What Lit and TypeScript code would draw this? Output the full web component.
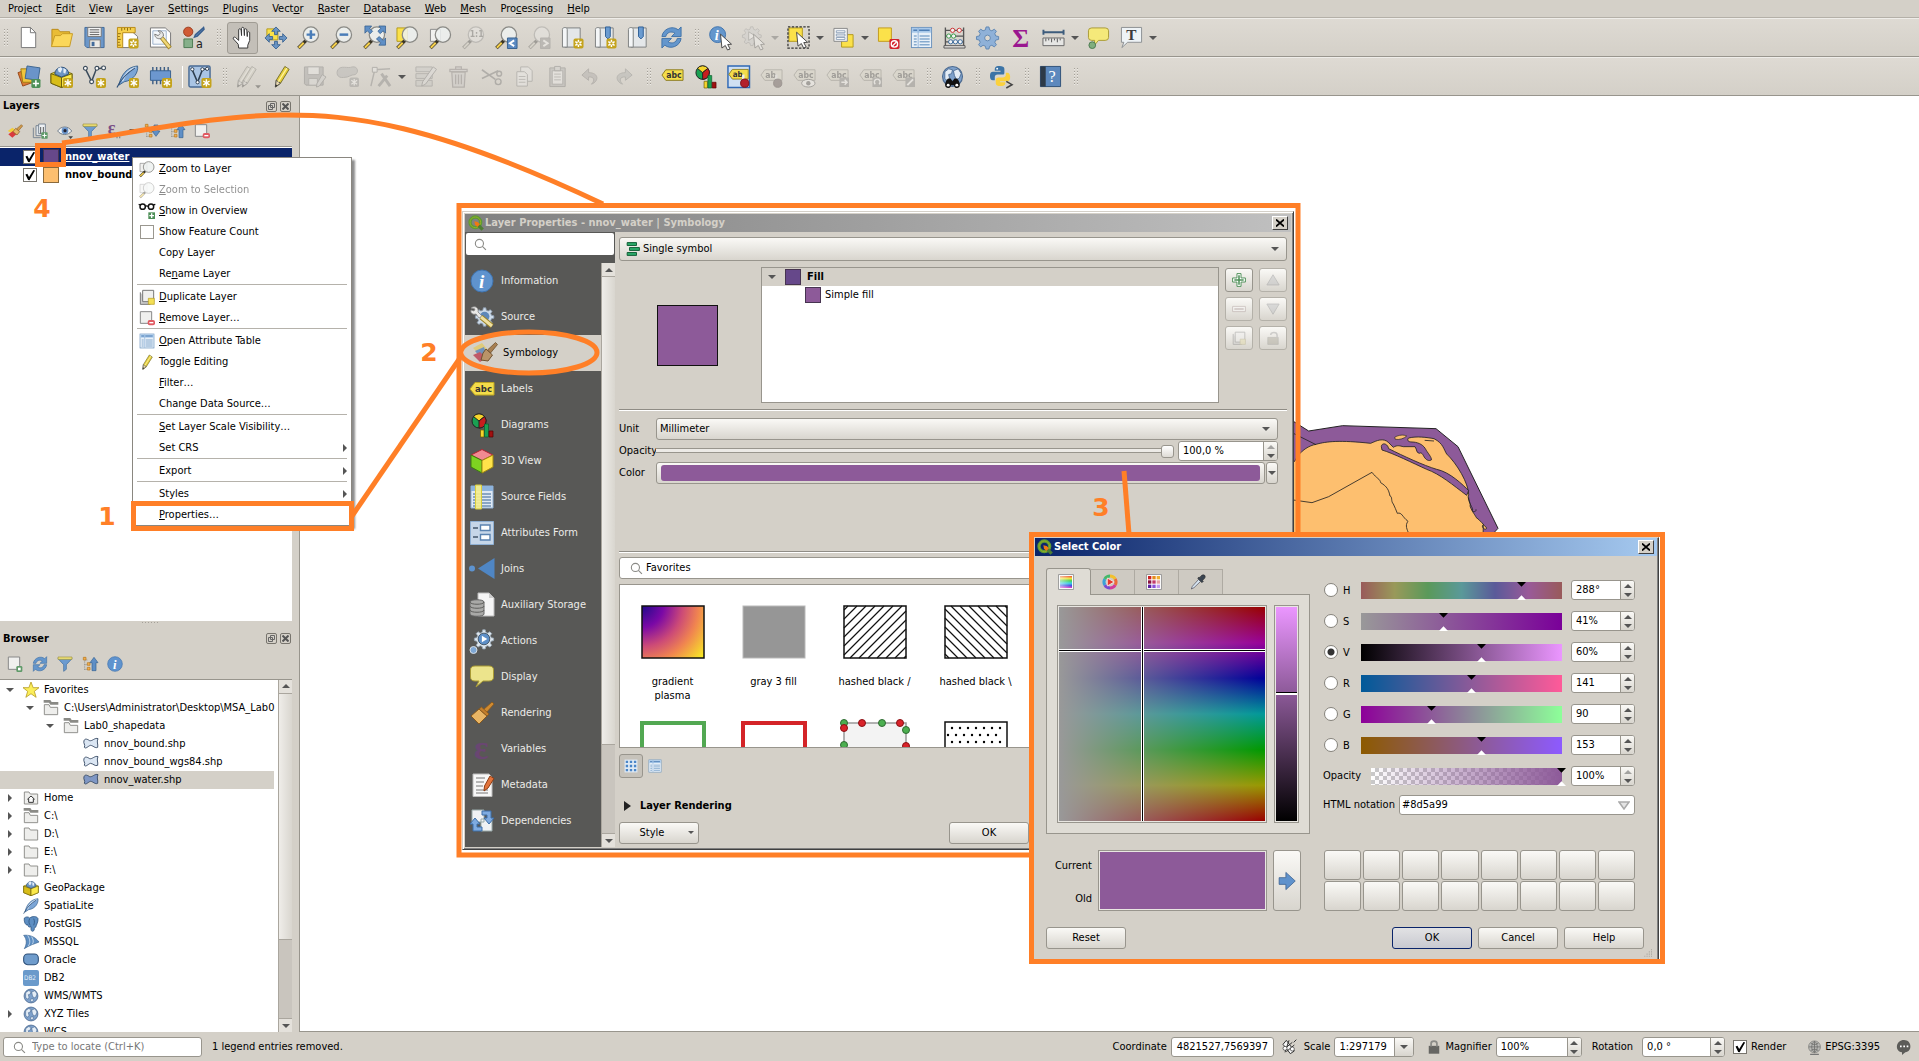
import { LitElement, html, svg, css, nothing, TemplateResult } from "lit";
import { customElement, property } from "lit/decorators.js";
import { classMap } from "lit/directives/class-map.js";
import { styleMap } from "lit/directives/style-map.js";

/* ---------- icon fragments, drawn on a 24 x 24 grid ---------- */

const sparkle = (x: number, y: number) => svg`
  <rect x=${x - 0.5} y=${y - 0.5} width="10.500" height="10.500" rx="2" fill="#c4a31c"/>
  <path transform="translate(${x + 4.7} ${y + 4.7})" d="M0 -3.800V3.800M-3.300 -2L3.300 2M-3.300 2L3.300 -2" stroke="#fff" stroke-width="1.500"/>`;

const ring = (x: number, y: number) => svg`
  ${sparkle(x, y)}<circle cx=${x + 4.7} cy=${y + 4.7} r="1.700" fill="#c4a31c" stroke="#fff" stroke-width=".8"/>`;

const lens = (inner: unknown = nothing, back: unknown = nothing) => svg`
  ${back}
  <path d="M9.500 15L1.500 23" stroke="#3a3526" stroke-width="3.600"/>
  <path d="M7 17.500L1.900 22.600" stroke="#f4cf4c" stroke-width="2.200"/>
  <circle cx="14.500" cy="9" r="8" fill="#eef1f0" fill-opacity=".86" stroke="#8a8a86" stroke-width="1.300"/>
  ${inner}`;

const globe = svg`
  <circle cx="12" cy="12" r="10.400" fill="#7ea1cb" stroke="#4c6a90" stroke-width="1.200"/>
  <path d="M4 7l4-3 4 1-1 4-3 1 1 4-2 3-3-3zM13 6l5-2 3 5-2 5-3 1-2-4zM11 17l4-1 1 3-4 2z" fill="#e4edf6" stroke="#3d5e88" stroke-width=".8"/>`;

const tag = (label: string) => svg`
  <path d="M1 10.500L5 5H23V16H5Z" fill="#f4dd4a" stroke="#8b7a1e"/>
  <text x="5.500" y="14" font-size="9" font-weight="700" fill="#333">${label}</text>`;

const cursor = svg`<path d="M12 8.500L23.500 19L19.500 19.300L22 24L19.300 25L17 20.300L13.500 23Z" fill="#fff" stroke="#444" stroke-width="1"/>`;

const pencil = svg`
  <path d="M6.500 16L15.500 1.500L20 4.500L11 19L6 23Z" fill="#e6cf3c" stroke="#77702c"/>
  <path d="M5.500 23L6.500 16L11 19Z" fill="#e9d9b0" stroke="#555"/>
  <path d="M5.500 23L6 20L8 21.300Z" fill="#333"/>
  <path d="M8.700 17.400L17.600 3.300" stroke="#fff3a0" stroke-width="1.300"/>`;

const table = svg`
  <rect x="1.500" y="1.500" width="21" height="21" fill="#e8f0f8" stroke="#6b93bd"/>
  <path d="M2 2H22V7H2Z" fill="#a9c9ea"/>
  <path d="M3.500 4.500H7.500M9.500 4.500H20.500" stroke="#4f7fb5" stroke-width="1.500"/>
  <path d="M8.500 2V22" stroke="#8fb4da"/>
  <path d="M4 10.500H7M4 13.500H7M4 16.500H7M4 19.500H7M10 10.500H20.500M10 13.500H20.500M10 16.500H20.500M10 19.500H20.500" stroke="#86aace" stroke-width="1.500"/>`;

const refresh = svg`
  <path d="M2 11C3 3 13 -1 19 4L22 1V11H12L15.500 7.500C12 5 7 6.500 6 11Z" fill="#6496cc" stroke="#4273a8"/>
  <path d="M22 13C21 21 11 25 5 20L2 23V13H12L8.500 16.500C12 19 17 17.500 18 13Z" fill="#6496cc" stroke="#4273a8"/>`;

const book = svg`
  <path d="M4 2H20V22H4Z" fill="#e4e7e9" stroke="#7c7f80"/>
  <path d="M1.500 3.500C1.500 1 6.500 1 6.500 3.500V22H1.500Z" fill="#f4f6f7" stroke="#7c7f80"/>`;
const ribbon = svg`<path d="M12 1H17V11L14.500 13.500L12 11Z" fill="#6a9bd0" stroke="#2f5f95"/>`;

const feather = svg`
  <path d="M3 21C5 11 11 2 22.500 1C23.500 7 19 16 8.500 17.500Z" fill="#7ba5d6" stroke="#3f668f"/>
  <path d="M6.500 17C9 10 14 5 20.500 2.500" fill="none" stroke="#cfe0f2" stroke-width="2"/>
  <path d="M1 23.500C5 15 12 8 20 3" fill="none" stroke="#2f5078" stroke-width="1.200"/>`;

const box = svg`
  <path d="M1 9L12 5L23 9V19L12 23.500L1 19Z" fill="#f1d92e" stroke="#7f7110"/>
  <path d="M1 9L12 13V23.500L1 19Z" fill="#d8bd18" stroke="#6b5f0c"/>
  <path d="M12 13V23.500L23 19V9Z" fill="#fbe94a" stroke="#6b5f0c"/>
  <path d="M5 9.500A7 7 0 1 1 19.500 9.500L12 12.500Z" fill="#6d95c4" stroke="#2f5078"/>
  <path d="M8 4l3-2 2 2-2 4-2-1zM14 3l3 2-1 4-2-1z" fill="#e4edf6"/>`;

const pie = svg`
  <circle cx="9" cy="8" r="7" fill="#1aa052" stroke="#222"/>
  <path d="M9 8L3.500 3.500A7 7 0 0 1 14.500 3.500Z" fill="#f6d52c" stroke="#222"/>
  <path d="M9 8L14.500 3.500A7 7 0 0 1 9 15Z" fill="#c81e1e" stroke="#222"/>
  <path d="M10.500 17H14V24H10.500Z" fill="#f6d52c" stroke="#6b5a00" stroke-width=".7"/>
  <path d="M14.500 11H18.500V24H14.500Z" fill="#1aa052" stroke="#0d5a2c" stroke-width=".7"/>
  <path d="M19 18H23V24H19Z" fill="#a01010" stroke="#500" stroke-width=".7"/>`;

const gearShape = (fill: string, stroke: string) => svg`
  <path d="M10.500 1h3l.7 3 2.300 1 2.600-1.700 2.200 2.200L19.600 8l1 2.400 3 .6v3l-3 .7-1 2.300 1.700 2.600-2.200 2.200-2.600-1.700-2.300 1-.7 2.900h-3l-.7-2.900-2.400-1-2.500 1.700-2.200-2.200L4.400 17l-1-2.300-2.900-.7v-3l2.900-.6L4.400 8 2.700 5.500l2.200-2.200L7.400 5l2.400-1z" fill=${fill} stroke=${stroke}/>`;

const balloon = svg`<path d="M5 2H19Q22.500 2 22.500 5V12Q22.500 15 19 15H12L7 21L8 15H5Q1.500 15 1.500 12V5Q1.500 2 5 2Z" fill="#f5e97a" stroke="#a89a34"/>`;

const pin = svg`<path d="M17 10V16" stroke="#eee" stroke-width="2.500"/><circle cx="18.500" cy="19" r="4.300" fill="#b3202c" stroke="#7a1018"/>`;

const info = svg`
  <circle cx="12" cy="12" r="11" fill="#5f93ce" stroke="#3f73ae"/>
  <text x="9" y="19" font-size="19" font-weight="700" font-style="italic" font-family="Liberation Serif, serif" fill="#fff">i</text>`;

const folder = svg`<path d="M2 3H9L11 6H22V21H2Z" fill="#eeeeec" stroke="#8a8a86" stroke-width="1.400"/>`;
const folderLinked = svg`<path d="M1 0H11L13 3H23V7H11L9 4H1Z" fill="#8a8a86"/><path d="M2 7V22H22V11H11L9 7Z" fill="#eeeeec" stroke="#8a8a86" stroke-width="1.400"/>`;

const polygonLayer = (fill: string) => svg`<path d="M1.500 7C3 3 7 5 10 7C14 8 18 2 22.500 4C20 9 23 12 22 17C18 19 15 14 11 14C8 15 4 20 2 17C4 13 0 11 1.500 7Z" fill=${fill} stroke="#3a4c66" stroke-width="1.400"/>`;

const magnifierPlain = svg`<circle cx="10" cy="10" r="7.500" fill="none" stroke="#8a8a86" stroke-width="2"/><path d="M15.500 15.500L22 22" stroke="#8a8a86" stroke-width="2"/>`;

const filter = svg`<path d="M1.500 4L10 13V23L14 20V13L22.500 4Z" fill="#6c9bd0" stroke="#3d6a9c"/><path d="M1.500 1.500H22.500V5H1.500Z" fill="#f1e37a" stroke="#9c8f3a"/>`;

const scissors = svg`<path d="M2 5L16 15M2 14L19 6" stroke="#666" stroke-width="1.800"/><circle cx="19" cy="17.500" r="3" fill="none" stroke="#666" stroke-width="1.500"/><circle cx="20" cy="9" r="2.500" fill="none" stroke="#666" stroke-width="1.500"/>`;

const qgisLogo = svg`
  <circle cx="11" cy="11" r="8" fill="none" stroke="#5d9a35" stroke-width="5"/>
  <circle cx="11" cy="11" r="8" fill="none" stroke="#93b023" stroke-width="1.500"/>
  <path d="M13 13L22 22" stroke="#4d7e33" stroke-width="5"/>
  <path d="M9.500 9.500L14.500 10.500L18 14L14 18L10.500 14.500Z" fill="#ee7913"/>`;

const brush = svg`
  <path d="M22 1L24 3L16 12L13 9Z" fill="#d08a30" stroke="#86571c" stroke-width=".8"/>
  <path d="M9 8L17 15L9 23L1 15Z" fill="#e8b565" stroke="#86571c"/>
  <path d="M9 8L11.500 6L19 13L17 15Z" fill="#c47f2c" stroke="#86571c" stroke-width=".8"/>`;

const paint = svg`
  <path d="M1 7L10 2L15 8L9 15Z" fill="#dfcb7a"/><path d="M3 10L12 6L14 12L9 17Z" fill="#6f92bd"/><path d="M1 14L8 11L14 17L8 21Z" fill="#bf5a68"/>
  <path d="M23.500 1.500L25.500 3.500L18.500 12L15.500 9Z" fill="#a87f50" stroke="#6f5230" stroke-width=".8"/>
  <path d="M14 8L20.500 14L16 20L9 19L11 12Z" fill="#b99468" stroke="#6f5230"/>`;

const stylePaint = svg`
  <path d="M1 12L8 7L14 11L9 16Z" fill="#f2cf3c"/><path d="M2 17L9 12L14 17L8 22Z" fill="#d93a3f"/>
  <path d="M21.500 2.500L23.500 4.500L17 12L14 9Z" fill="#d09a4a" stroke="#86571c" stroke-width=".8"/>
  <path d="M13 8L19 13L15 18L9 13Z" fill="#e3b56a" stroke="#86571c"/>`;

const tree = svg`<path d="M4 2V22M4 6H9M4 13H9M4 20H9" stroke="#8c8c88" stroke-width="1.200" stroke-dasharray="1.500 1"/><path d="M2 2H6V6H2ZM8 10H12V14H8ZM8 17H12V21H8Z" fill="#f0b050" stroke="#b8741a"/>`;

const ICONS: Record<string, unknown> = {
  new: svg`<path d="M4.500 1.500H14L19.500 7V22.500H4.500Z" fill="#fff" stroke="#777"/><path d="M14 1.500V7H19.500" fill="none" stroke="#777"/>`,
  open: svg`<path d="M2 21V3.500H8.500L10.500 6H20.500V9" fill="#e9bc35" stroke="#b98a18"/><path d="M1.500 21.500L5 10H11L13 8H23.500L20.500 21.500Z" fill="#fbd75a" stroke="#c79a22"/>`,
  save: svg`<path d="M2 1.500H22V22.500H4L2 20.500Z" fill="#6c97c9" stroke="#426b9b"/><path d="M5 1.500H19V11H5Z" fill="#f5f5f5" stroke="#777"/><path d="M7 4H17M7 6.500H17M7 9H17" stroke="#555"/><path d="M7 14.500H18V22.500H7Z" fill="#eceae6" stroke="#777"/><path d="M9 16.500H12V21H9Z" fill="#426b9b"/>`,
  newLayout: svg`<path d="M6 6H17L22.500 11V22.500H6Z" fill="#fff" stroke="#777"/><path d="M1.500 1.500H20V7H7V22.500H1.500Z" fill="#f6d04c" stroke="#b98a18"/><path d="M6 2V5M9 2V4M12 2V5M15 2V4M2 8H5M2 11H4M2 14H5M2 17H4M2 20H5" stroke="#8b6a10"/>${ring(13.500, 13.500)}`,
  layoutMgr: svg`<path d="M1.500 2H17L22.500 7V22H1.500Z" fill="#fff" stroke="#777"/><path d="M4 5H18V19H4Z" fill="#f4f7fa" stroke="#9db3cc"/><path d="M13 12L22 23" stroke="#a3872a" stroke-width="4.500"/><path d="M13 12L21.500 22.300" stroke="#f0d878" stroke-width="2.600"/><path d="M6 8.500C6 12 9 14 12.500 13L15 10.500C15.500 7 12.500 4.500 9.500 5L12 7.500L9.500 10Z" fill="#e8e8e6" stroke="#777"/>`,
  styleMgr: svg`<circle cx="6.500" cy="6" r="4.800" fill="#d05a34" stroke="#9c3b1c"/><path d="M22.500 1.500L14 9L13 11.500L16 10.500L23 3.500Z" fill="#5e86b6" stroke="#395f8e" stroke-width="1.500"/><path d="M2 13.500H11V22.500H2Z" fill="#86b08a" stroke="#4c7a52"/><text x="14.500" y="22.500" font-size="13" fill="#222">a</text>`,
  hand: svg`<path d="M8 23L7.500 19L2.500 13.500C1.500 12 3.500 11 4.700 12L8 15V4C8 2.500 10.300 2.500 10.500 4L11 10V2.500C11.200 1 13.200 1 13.500 2.500L14 10V4C14.200 2.500 16.200 2.500 16.500 4L17 11V7C17.200 5.700 19.300 5.700 19.500 7V15L17.500 20V23Z" fill="#fff" stroke="#333"/>`,
  panSel: svg`<path d="M3 3H14.500V14.500H3Z" fill="#fbe14a" stroke="#b39a1c"/><path d="M12.500 1L17 5.500H14V9H11V5.500H8ZM12.500 24L8 19.500H11V16H14V19.500H17ZM1 12.500L5.500 8V11H9V14H5.500V17ZM24 12.500L19.500 17V14H16V11H19.500V8Z" fill="#6a94c4" stroke="#35608f" stroke-width=".9"/>`,
  zoomIn: lens(svg`<path d="M14.500 4.500V13.500M10 9H19" stroke="#4a7db8" stroke-width="2.600"/>`),
  zoomOut: lens(svg`<path d="M10 9H19" stroke="#4a7db8" stroke-width="2.600"/>`),
  zoomFull: lens(svg`<path d="M2 0H9L7 2.500L10 5.500L7.500 8L4.500 5L2 7.500ZM23.500 0H16.500L18.500 2.500L15.500 5.500L18 8L21 5L23.500 7.500ZM23.500 20H16.500L18.500 17.500L14 13.500L17 11L21 15L23.500 12.500Z" fill="#5f8fc6" stroke="#35608f" stroke-width=".8"/>`),
  zoomSel: lens(nothing, svg`<path d="M1 2H12V16H1Z" fill="#fbe14a" stroke="#b39a1c"/>`),
  zoomLayer: lens(nothing, svg`<path d="M1.500 3.500H12V16H1.500Z" fill="#f1f1ef" stroke="#888"/>`),
  zoomNative: lens(svg`<text x="8" y="12" font-size="9" font-weight="700" fill="#555">1:1</text>`),
  zoomLast: lens(svg`<path d="M13 12.500H23V23.500H13Z" fill="#5b8ac2" stroke="#35608f"/><path d="M20 15L15.500 18L20 21" fill="none" stroke="#fff" stroke-width="2"/>`),
  zoomNext: lens(svg`<path d="M13 12.500H23V23.500H13Z" fill="#888" stroke="#777"/><path d="M16 15L20.500 18L16 21" fill="none" stroke="#fff" stroke-width="2"/>`),
  bookNew: svg`${book}${ring(13.500, 13.500)}`,
  bookRibbonNew: svg`${book}${ribbon}${ring(13.500, 13.500)}`,
  bookRibbon: svg`${book}${ribbon}`,
  refresh,
  identify: svg`<circle cx="9" cy="9" r="8.300" fill="#6496cc" stroke="#3f73ae"/><text x="6" y="14.500" font-size="15" font-weight="700" font-style="italic" font-family="Liberation Serif, serif" fill="#fff">i</text>${cursor}`,
  action: svg`<g transform="scale(.85)">${gearShape("#cfcfcf", "#888")}</g><path d="M7 6L14 10.500L7 15Z" fill="#fff" stroke="#777"/>${cursor}`,
  select: svg`<path d="M2 2H16V16H2Z" fill="#fbe14a" stroke="#b39a1c"/><path d="M1 1H23V23H1Z" fill="none" stroke="#333" stroke-width="1.300" stroke-dasharray="2.500 1.500"/><g transform="translate(-2 -2)">${cursor}</g>`,
  form: svg`<path d="M10 9H22V22H10Z" fill="#fbe14a" stroke="#b39a1c"/><path d="M2 2.500H16V16H2Z" fill="#f4f5f6" stroke="#888"/><path d="M4.500 5H13.500V7H4.500ZM4.500 8.500H13.500V10.500H4.500ZM4.500 12H13.500V14H4.500Z" fill="#fff" stroke="#778fab" stroke-width=".8"/>`,
  deselect: svg`<path d="M1.500 2H15V16H1.500Z" fill="#fbe14a" stroke="#c19a1c"/><rect x="13" y="13.500" width="10.500" height="10.500" rx="1.500" fill="#d3222c"/><circle cx="18.200" cy="18.700" r="3.300" fill="none" stroke="#fff" stroke-width="1.400"/><path d="M16 21L20.500 16.500" stroke="#fff" stroke-width="1.300"/>`,
  table,
  abacus: svg`<path d="M2.500 1.500V21M21.500 1.500V21M2.500 4.500H21.500M2.500 10.500H21.500M2.500 16.500H21.500" stroke="#555" stroke-width="1.400"/><path d="M1 20.500H23V23H1Z" fill="#e5e3df" stroke="#555"/><g fill="#f4f4f4"><g stroke="#c33"><circle cx="10" cy="4.500" r="2.200"/><circle cx="17" cy="4.500" r="2.200"/></g><g stroke="#3a9a4a"><circle cx="6" cy="10.500" r="2.200"/><circle cx="11" cy="10.500" r="2.200"/></g><g stroke="#37699c"><circle cx="8" cy="16.500" r="2.200"/><circle cx="13" cy="16.500" r="2.200"/><circle cx="18" cy="16.500" r="2.200"/></g></g>`,
  gear: svg`${gearShape("#8fb1d8", "#5f87b3")}<circle cx="12" cy="12.500" r="3" fill="#dcd8d0" stroke="#5f87b3"/>`,
  sigma: svg`<text x="3.500" y="22" font-size="27" font-weight="700" font-family="Liberation Serif, serif" fill="#9a1790">Σ</text>`,
  measure: svg`<path d="M1.500 6.500H22.500M1.500 4V9M22.500 4V9" stroke="#3d5c7c" stroke-width="2"/><path d="M1 12.500H23V20.500H1Z" fill="#e6e6e4" stroke="#666"/><path d="M4 13V16M7 13V15M10 13V17M13 13V15M16 13V17M19 13V15" stroke="#555"/>`,
  tip: svg`${balloon}<circle cx="5.500" cy="20" r="3.500" fill="#7fae7e" stroke="#4c7a52"/>`,
  textAnn: svg`<path d="M1.500 1.500H22.500V17H8L2 22.500L4 17H1.500Z" fill="#eef3f6" stroke="#8b8f92"/><text x="6.500" y="15" font-size="16" font-weight="700" font-family="Liberation Serif, serif" fill="#3c3c3c">T</text>`,
  dataSource: svg`<path d="M1 8L12 4L17 18L6 22Z" fill="#dc7a34" stroke="#96481a"/><path d="M4 4H17V18H6Z" fill="#f1c53c" stroke="#a07c14"/><path d="M10.500 1L24 3L22 16L8.500 14Z" fill="#6a94c9" stroke="#3b638f"/><rect x="15" y="14.500" width="9.500" height="9.500" rx="1.500" fill="#4d8f57"/><path d="M19.700 16V22.500M16.500 19.300H23" stroke="#fff" stroke-width="1.600"/>`,
  geopackage: svg`${box}${sparkle(14, 14)}`,
  geopackagePlain: box,
  vectorNew: svg`<path d="M2.500 4L9 17L14 4L22 3" fill="none" stroke="#3c4c5c" stroke-width="1.600"/><g fill="#fff" stroke="#3c4c5c" stroke-width="1.200"><circle cx="2.500" cy="3.500" r="2"/><circle cx="9" cy="17.500" r="2"/><circle cx="14.500" cy="3.500" r="2"/><circle cx="21.500" cy="3" r="2"/></g>${sparkle(14, 14)}`,
  feather: svg`${feather}${sparkle(14, 14)}`,
  featherPlain: feather,
  chip: svg`<path d="M4 2V20M8 2V20M12 2V20M16 2V20M20 2V20" stroke="#3f5f85" stroke-width="1.500"/><path d="M1.500 6H22.500V16H1.500Z" fill="#6c97cf" stroke="#36608f"/>${sparkle(14, 14)}`,
  virtual: svg`<rect x="1" y="1" width="22" height="22" rx="1.500" fill="#a9c4e4" stroke="#486a94" stroke-width="1.500"/><path d="M4 4L10 18L15 5L20 4" fill="none" stroke="#2d3e50" stroke-width="1.600"/><g fill="#fff" stroke="#2d3e50"><circle cx="4.500" cy="4.500" r="1.700"/><circle cx="10" cy="18" r="1.700"/><circle cx="15" cy="4.500" r="1.700"/><circle cx="20" cy="4" r="1.700"/></g>${sparkle(14.500, 14)}`,
  pencils: svg`<g transform="translate(-5 0)">${pencil}</g>${pencil}<path d="M19 21H25L22 24.500Z" fill="#222"/>`,
  pencil,
  saveEdits: svg`<path d="M1.500 2H21V21H3L1.500 19.500Z" fill="#999" stroke="#666"/><path d="M5 2H17V10H5Z" fill="#eee" stroke="#777"/><path d="M6 14H15V21H6Z" fill="#ddd" stroke="#777"/><path d="M20 10L24 12.500L17 22L14 23L14.500 19.500Z" fill="#ccc" stroke="#666"/>`,
  addPoly: svg`<path d="M2 5C5 0 12 4 17 2C23 1 24 8 20 10C15 10 14 13 8 13C1 14 0 8 2 5Z" fill="#aaa" stroke="#777"/><rect x="14" y="13" width="10" height="10" rx="2" fill="#888"/><path d="M19 14.500V21.500M16 16L22 20M16 20L22 16" stroke="#fff" stroke-width="1.300"/>`,
  vertex: svg`<path d="M2 22L6 5L22 4" fill="none" stroke="#777" stroke-width="1.500"/><path d="M3.500 2.500H8.500V7.500H3.500Z" fill="#eee" stroke="#666"/><path d="M10 22L19 11M13 9L22 22" stroke="#777" stroke-width="3"/>`,
  multiEdit: svg`<path d="M2 2H19V7H2ZM2 9H19V14H2ZM2 16H19V22H2Z" fill="#c9c6a8" stroke="#777"/><path d="M20 2L23.500 4.500L12 20L8 22L9 17.500Z" fill="#ddd" stroke="#666"/>`,
  trash: svg`<path d="M3 4.500H21V7H3ZM9 2H15V4.500H9ZM5 7.500H19L18 23H6Z" fill="#d9c4c2" stroke="#9a6a66" stroke-width="1.300"/><path d="M9 10V20M12 10V20M15 10V20" stroke="#9a6a66" stroke-width="1.300"/>`,
  cut: scissors,
  copy: svg`<path d="M8 2H16L20 6V17H8Z" fill="#eee" stroke="#777"/><path d="M4 7H12L15 10V22H4Z" fill="#f5f5f5" stroke="#777"/><path d="M6 12H13M6 15H13M6 18H13" stroke="#888"/>`,
  paste: svg`<path d="M4 3H20V22.500H4Z" fill="#aaa" stroke="#666"/><path d="M6.500 6H17.500V20H6.500Z" fill="#f5f5f5" stroke="#777"/><path d="M9 1.500H15V6H9Z" fill="#ccc" stroke="#666"/><path d="M8.500 9.500H15.500M8.500 12.500H15.500M8.500 15.500H15.500" stroke="#888"/>`,
  undo: svg`<path d="M10 4L3 10.500L10 16V12.500C16 12 17 16 13 20C21 17 21 8 10 8Z" fill="#b8998c" stroke="#8c6a5c"/>`,
  redo: svg`<path d="M14 4L21 10.500L14 16V12.500C8 12 7 16 11 20C3 17 3 8 14 8Z" fill="#9cae9c" stroke="#6c806c"/>`,
  abc: tag("abc"),
  diagram: pie,
  abPin: svg`<path d="M1 1H23.500V23.500H1Z" fill="#cfe0f3" stroke="#2f68b5" stroke-width="1.500"/><g transform="translate(1 0) scale(.92)">${tag("ab")}</g>${pin}`,
  tagPin: svg`${tag("ab")}${pin}`,
  tagEye: svg`${tag("abc")}<ellipse cx="16" cy="19" rx="7" ry="4" fill="#fff" stroke="#444"/><circle cx="16" cy="19" r="2.300" fill="#444"/>`,
  tagMove: svg`${tag("abc")}<path d="M14 13H24V23H14Z" fill="#777"/><path d="M16 18H22M19.500 15.500L22 18L19.500 20.500" fill="none" stroke="#fff" stroke-width="1.500"/>`,
  tagRotate: svg`${tag("abc")}<path d="M14 13H24V23H14Z" fill="#777"/><path d="M17 20A3 3 0 1 1 21 20" fill="none" stroke="#fff" stroke-width="1.500"/>`,
  tagEdit: svg`${tag("abc")}<path d="M14 13H24V23H14Z" fill="#777"/><path d="M16 21L22 15" stroke="#fff" stroke-width="2"/>`,
  metaSearch: svg`${globe}<path d="M5 23C3 20 6 14 8 14H10L12 17L14 14H16C18 14 21 20 19 23C17 25 14 24 13.500 21H10.500C10 24 7 25 5 23Z" fill="#111"/><circle cx="7.500" cy="21" r="1.500" fill="#fff"/><circle cx="16.500" cy="21" r="1.500" fill="#fff"/>`,
  python: svg`<path d="M10 1C5 1 5 3 5 6H11V7H3C0 7 0 10 0 12S1 16 3 16H5V13C5 11 6 10 8 10H13C15 10 15 9 15 7V4C15 2 13 1 10 1Z" fill="#3c74a6"/><circle cx="7.500" cy="3.800" r="1" fill="#fff"/><path d="M11 22C16 22 16 20 16 18H10.500V17H18C21 17 21 14 21 12S20 8 18 8H16.500V10.500C16.500 12 15 13 13.500 13H9C7 13 6 14 6 16V19C6 21 8 22 11 22Z" fill="#fbd13d"/><path d="M17 17L23 20.500L17 24" fill="none" stroke="#444" stroke-width="1.600"/>`,
  help: svg`<path d="M1.500 1.500H22.500V22.500H1.500Z" fill="#5c88bd" stroke="#2f5078"/><path d="M1.500 1.500H7V22.500H1.500Z" fill="#2d3a48"/><text x="10" y="18" font-size="17" font-family="Liberation Serif, serif" fill="#fff">?</text>`,
  paint,
  stylePaint,
  addGroup: svg`<path d="M2 7V22H13" fill="none" stroke="#7b8794" stroke-width="1.500"/><path d="M6 4H17V19H6Z" fill="#dfe3e7" stroke="#7b8794" stroke-width="1.500"/><path d="M10 1.500H20V16H10Z" fill="#eef1f4" stroke="#7b8794" stroke-width="1.500"/><path d="M13 6V16M17 6V16" stroke="#444" stroke-width="1.300"/><rect x="14" y="14" width="9.500" height="9.500" rx="1" fill="#5f9a68"/><path d="M18.700 15.500V22M15.500 18.700H22" stroke="#fff" stroke-width="1.500"/>`,
  eye: svg`<path d="M1 12C6 4 17 4 22 12C17 19 6 19 1 12Z" fill="#f3f5f7" stroke="#6f7b88" stroke-width="1.500"/><circle cx="12" cy="11.500" r="5" fill="#6a94c9"/><circle cx="12" cy="11.500" r="2.400" fill="#223"/><path d="M17 20H24L20.500 24Z" fill="#444"/>`,
  filter,
  expression: svg`<text x="1" y="16" font-size="27" font-family="Liberation Serif, serif" font-weight="700" fill="#7a4f86">ε</text><path d="M15 20V23M19 20V23" stroke="#888" stroke-width="2"/>`,
  expand: svg`${tree}<path d="M15 3H21V12H24L18 20L12 12H15Z" fill="#5f8fc6" stroke="#35608f"/>`,
  collapse: svg`${tree}<path d="M15 22H21V10H24L18 2L12 10H15Z" fill="#5f8fc6" stroke="#35608f"/>`,
  removeLayer: svg`<path d="M2 2.500H19V20H2Z" fill="#f0f0ee" stroke="#888" stroke-width="1.500"/><rect x="13" y="15" width="11" height="8" rx="3" fill="#e05a62"/><path d="M15.500 19H21.500" stroke="#fff" stroke-width="2"/>`,
  addLayer: svg`<path d="M2 1.500H19V20H2Z" fill="#f0f0ee" stroke="#888" stroke-width="1.500"/><rect x="14" y="15" width="9" height="9" rx="2" fill="#5f9a68"/><rect x="16.500" y="17.500" width="4" height="4" fill="#fff"/>`,
  info,
  overview: svg`<circle cx="5.500" cy="5.500" r="4" fill="none" stroke="#111" stroke-width="2.200"/><circle cx="18" cy="5.500" r="4" fill="none" stroke="#111" stroke-width="2.200"/><path d="M9.500 5C11 4 12 4 14 5M-.500 2L2 3M24.500 2L21.500 3" stroke="#111" stroke-width="2" fill="none"/><rect x="14" y="14" width="10" height="10" fill="#4d8f57"/><path d="M19 15.500V22.500M15.500 19H22.500" stroke="#fff" stroke-width="2"/>`,
  duplicate: svg`<path d="M2 5V23H17" fill="#ccc" stroke="#777" stroke-width="1.500"/><path d="M5.500 2H22V19H5.500Z" fill="#f0f0ee" stroke="#777" stroke-width="1.500"/><path d="M14 14H23V23H14Z" fill="#f3df55" stroke="#b39a1c"/>`,
  star: svg`<path d="M12 0L15.200 8.500H24L17 14L19.700 23L12 17.600L4.300 23L7 14L0 8.500H8.800Z" fill="#fbee5a" stroke="#b59a20" stroke-width="1.200"/>`,
  folder, folderLinked,
  home: svg`${folder}<path d="M6.500 14L12 9L17.500 14M8.500 13V18.500H15.500V13" fill="#fff" stroke="#333" stroke-width="1.500"/>`,
  polygon: polygonLayer("#dbe6f3"),
  polygonSel: polygonLayer("#7f97c4"),
  postgis: svg`<path d="M2 3C6 0 9 2 10 3C14 0 21 0 22.500 4C23 9 20 13 19 17C18 17 17 16 17 19C17 24 12 24 12 20V16C9 18 7 15 7 13C4 15 1 8 2 3Z" fill="#5d8ec2" stroke="#2f5582" stroke-width="1.200"/><path d="M10 4C8 8 9 12 11 14M16 4C18 8 17 11 16 14" fill="none" stroke="#2f5582" stroke-width="1.200"/>`,
  mssql: svg`<path d="M1 2C10 1 18 4 24 12C17 15 9 17 2 22C6 15 6 8 1 2Z" fill="#5d8ec2" stroke="#3b638f"/><path d="M7 2C11 8 11 14 8 18M13 4C16 9 16 12 14 15.500" stroke="#d5e3f2" stroke-width="1.200" fill="none"/>`,
  oracle: svg`<rect x="1" y="3" width="22" height="16" rx="6" fill="#6f9ccc" stroke="#2d4f78" stroke-width="1.600"/>`,
  db2: svg`<rect x="0" y="0" width="24" height="24" rx="3" fill="#6a9acb"/><text x="1.500" y="15" font-size="9.500" fill="#e8f1fa">DB2</text>`,
  globe,
  search: magnifierPlain,
  source: svg`<g transform="translate(5 2) scale(.8)">${gearShape("#cddbe9", "#8a9bad")}<circle cx="12" cy="12" r="6" fill="#5e88b8"/></g><path d="M1 3C5 0 9 3 8 7L12 11L9 13L6 9C3 10 0 8 1 5L4 6L5 4Z" fill="#e9e9e7" stroke="#888" stroke-width=".8"/><path d="M11 12L22 21" stroke="#9c8326" stroke-width="5"/><path d="M11 12L22 21" stroke="#efe0a0" stroke-width="3"/>`,
  labels: svg`<path d="M0 12L5 5.500H24V18H5Z" fill="#f4dd4a" stroke="#bfa722"/><text x="5" y="15" font-size="9.500" font-weight="700" fill="#333">abc</text>`,
  view3d: svg`<path d="M12 .500L23 6L12 11.500L1 6Z" fill="#f28a92" stroke="#b32230"/><path d="M1 6L12 11.500V24L1 18Z" fill="#7ed321" stroke="#3d7a10"/><path d="M23 6L12 11.500V24L23 18Z" fill="#ffe34a" stroke="#a08a10"/>`,
  fields: svg`<path d="M1 1H23V23H1Z" fill="#dfe9f4" stroke="#8fb0d4"/><path d="M1 1H23V6H1Z" fill="#8db3dc"/><path d="M3 9H21M3 12H21M3 15H21M3 18H21M3 21H21" stroke="#6f90b5" stroke-width="1.300"/><path d="M5.500 0H11.500V24H5.500Z" fill="#f6ef8a" fill-opacity=".9" stroke="#d8cc3c"/>`,
  attrForm: svg`<path d="M.500 .500H23.500V23.500H.500Z" fill="#c6d6e8" stroke="#8fb0d4"/><path d="M3 7H8M3 16H8" stroke="#44576b" stroke-width="1.600"/><path d="M10.500 4H20V9.500H10.500ZM10.500 13.500H20V19H10.500Z" fill="#fff" stroke="#5b83b0" stroke-width="1.400"/>`,
  joins: svg`<circle cx="2" cy="11.500" r="3" fill="#5d93cf"/><path d="M8 11.500L24.500 1V22Z" fill="#4f86c4"/>`,
  auxStorage: svg`<path d="M8 0H19L24 5V23H8Z" fill="#f5f5f5" stroke="#bbb"/><path d="M19 0V5H24" fill="#ccc"/><path d="M0 9C0 6 14 6 14 9V21C14 24 0 24 0 21Z" fill="#a9a9a7" stroke="#666"/><path d="M0 9C0 12 14 12 14 9M0 13C0 16 14 16 14 13M0 17C0 20 14 20 14 17" fill="none" stroke="#5f5f5d"/>`,
  actions: svg`<g transform="translate(4 0) scale(.83)">${gearShape("#dfe7ee", "#9aa9b8")}<circle cx="12" cy="12" r="7" fill="#5d8fc8" stroke="#345"/><path d="M9.500 8L16 12L9.500 16Z" fill="#fff"/></g><circle cx="3.500" cy="21" r="3.500" fill="#7fa8d5" stroke="#d5dde6"/>`,
  display: svg`<path d="M5 1H19Q23.500 1 23.500 5V12Q23.500 16 19 16H13L6 22L9 16H5Q.500 16 .500 12V5Q.500 1 5 1Z" fill="#ece48c" stroke="#a89a34"/>`,
  rendering: brush,
  variables: svg`<text x="4" y="22" font-size="34" font-family="Liberation Serif, serif" font-weight="700" fill="#6a4672">ε</text>`,
  metadata: svg`<path d="M3 1H19L22 4V23.500H3Z" fill="#f7f7f7" stroke="#bbb"/><path d="M6 5H15M6 9H14M6 13H13M6 17H18M6 20H18" stroke="#777"/><path d="M20 3L24 5.500L18 15L14 18L14.500 13Z" fill="#e2743c" stroke="#8f3c12"/>`,
  dependencies: svg`<path d="M2 1H14V13H2ZM11 10H22V22H11Z" fill="#f0f2f4" stroke="#9aa"/><path d="M12 2H21V9H24L19 15L14 9H17V6H12ZM12 22H3V15H0L5 9L10 15H7V18H12Z" fill="#7fabe0" stroke="#3d6fa8"/>`,
  legend: svg`<path d="M2 2H8V10H2Z" fill="#f0a020"/>`,
  single: svg`<path d="M2 1H18V6H2ZM6 9.500H23V14.500H6ZM2 18H18V23H2Z" fill="#2aa868" stroke="#0f5a34" stroke-width="1.600"/>`,
  plus: svg`<path d="M8.500 1H15.500V8.500H23V15.500H15.500V23H8.500V15.500H1V8.500H8.500Z" fill="#fff" stroke="#4d8f57" stroke-width="1.600"/><path d="M12 4V20M4 12H20" stroke="#4d8f57" stroke-width="2.600"/>`,
  minus: svg`<path d="M1 7.500H23V16.500H1Z" fill="#fff" stroke="#b98a8a" stroke-width="1.600"/><path d="M4 12H20" stroke="#b98a8a" stroke-width="2.600"/>`,
  up: svg`<path d="M12 3L22.500 20.500H1.500Z" fill="#b5bac4" stroke="#7b8088" stroke-width="1.400"/>`,
  down: svg`<path d="M12 21L22.500 3.500H1.500Z" fill="#b5bac4" stroke="#7b8088" stroke-width="1.400"/>`,
  lockOpen: svg`<path d="M3 11H21V23H3Z" fill="#a8a07a" stroke="#777"/><path d="M8 7C8 1 19 1 19 7V11" fill="none" stroke="#999" stroke-width="2.500"/>`,
  lock: svg`<path d="M3 10H21V23.500H3Z" fill="#666663"/><path d="M7 11V6C7 .500 17 .500 17 6V11" fill="none" stroke="#8b8b88" stroke-width="3"/>`,
  iconGrid: svg`<path d="M1 1H23V23H1Z" fill="#dfeaf5"/><path d="M3 3H7V7H3ZM10 3H14V7H10ZM17 3H21V7H17ZM3 10H7V14H3ZM10 10H14V14H10ZM17 10H21V14H17ZM3 17H7V21H3ZM10 17H14V21H10ZM17 17H21V21H17Z" fill="#4b86c8"/>`,
  extents: svg`<path d="M3 8L8 2L20 18L14 22Z" fill="#f5f5f5" stroke="#333" stroke-width="1.500"/><path d="M5 15L17 5M8 19L20 9M12 2L6 20" stroke="#333" stroke-width="1.500"/><circle cx="6" cy="14" r="3" fill="#fff" stroke="#333"/><circle cx="17" cy="15" r="3" fill="#fff" stroke="#333"/><path d="M19 5L23 1" stroke="#333" stroke-width="1.500"/>`,
  globeGrey: svg`<circle cx="12" cy="11" r="9.500" fill="#b9b9b6" stroke="#8b8b88" stroke-width="1.500"/><path d="M3 11H21M12 2V20M6 5C9 8 15 8 18 5M6 17C9 14 15 14 18 17M12 2C6 7 6 15 12 20C18 15 18 7 12 2" fill="none" stroke="#6f6f6c" stroke-width="1.300"/><path d="M5 23H19" stroke="#777" stroke-width="2"/>`,
  messages: svg`<path d="M12 1.500C24 1.500 25 19 14 20L9 24V20C-3 18 0 1.500 12 1.500Z" fill="#5c5c59"/><path d="M6 11H8.500M11 11H13.500M16 11H18.500" stroke="#fff" stroke-width="2.500"/>`,
  arrowRight: svg`<path d="M1.500 7.500H10.500V.500L23 12L10.500 23.500V16.500H1.500Z" fill="#5f92cc" stroke="#3a5f8c"/>`,
  qgis: qgisLogo,
  tabRamp: svg`<path d="M.800 .800H23.200V23.200H.800Z" fill="#fff" stroke="#888" stroke-width="1.200"/><defs><linearGradient id="hues" x2="0" y2="1"><stop offset="0" stop-color="#f0442e"/><stop offset=".2" stop-color="#f0e02e"/><stop offset=".4" stop-color="#3ecf4a"/><stop offset=".6" stop-color="#2ed0e0"/><stop offset=".8" stop-color="#3a4ae0"/><stop offset="1" stop-color="#e82ec0"/></linearGradient><linearGradient id="fade"><stop offset="0" stop-color="#fff" stop-opacity=".55"/><stop offset="1" stop-color="#fff" stop-opacity="0"/></linearGradient></defs><path d="M3 3H21V21H3Z" fill="url(#hues)"/><path d="M3 3H21V21H3Z" fill="url(#fade)"/>`,
  tabWheel: svg`<g fill="none" stroke-width="4.500"><path d="M12 3A9 9 0 0 1 19.800 7.500" stroke="#f2c12e"/><path d="M19.800 7.500A9 9 0 0 1 19.800 16.500" stroke="#ee6a3a"/><path d="M19.800 16.500A9 9 0 0 1 12 21" stroke="#d23a9a"/><path d="M12 21A9 9 0 0 1 4.200 16.500" stroke="#7a4ad0"/><path d="M4.200 16.500A9 9 0 0 1 4.200 7.500" stroke="#3aa0d8"/><path d="M4.200 7.500A9 9 0 0 1 12 3" stroke="#45b868"/></g><path d="M8 6L18 12L8 18Z" fill="#e8382e" stroke="#fff"/>`,
  tabSwatch: svg`<path d="M.800 .800H23.200V23.200H.800Z" fill="#fff" stroke="#888" stroke-width="1.200"/><path d="M3 3H8V8H3Z" fill="#c22"/><path d="M9.500 3H14.500V8H9.500Z" fill="#e58a1c"/><path d="M16 3H21V8H16Z" fill="#f0b030"/><path d="M3 9.500H8V14.500H3Z" fill="#8a1240"/><path d="M9.500 9.500H14.500V14.500H9.500Z" fill="#c23a6a"/><path d="M16 9.500H21V14.500H16Z" fill="#e8a0a0"/><path d="M3 16H8V21H3Z" fill="#5a1ea0"/><path d="M9.500 16H14.500V21H9.500Z" fill="#8a50d8"/><path d="M16 16H21V21H16Z" fill="#c29af0"/>`,
  tabPicker: svg`<path d="M13 8L16 11L6 20.500L2 22.500L3.500 18.500Z" fill="#d8e6f2" stroke="#445"/><path d="M11.500 6.500L18 13L20 11L18.500 9.500C22 8 24 4 22 2S16 2 15 5.500L13.500 4.500Z" fill="#3a4450" stroke="#222" stroke-width=".8"/>`,
};

const icon = (name: string, size = 16): TemplateResult =>
  html`<svg class="icon" width=${size} height=${size} viewBox="0 0 24 24" aria-hidden="true">${ICONS[name] ?? nothing}</svg>`;

/** Renders a label whose accelerator letter is marked with an ampersand. */
const accel = (label: string) => {
  const at = label.indexOf("&");
  return at < 0 ? html`${label}` : html`${label.slice(0, at)}<u>${label[at + 1]}</u>${label.slice(at + 2)}`;
};

const base = css`
  :host {
    --face: #d4d0c8;
    --edge: #98958d;
    --orange: #ff7f27;
    --purple: #8d5a99;
    --ui: "DejaVu Sans Condensed", "Noto Sans", sans-serif;
    font-family: var(--ui);
    font-size: 11px;
    line-height: 14px;
    color: #000;
  }
  * { box-sizing: border-box; }
  ul { list-style: none; margin: 0; padding: 0; }
  u { text-underline-offset: 1px; }
  .icon { display: block; flex: none; overflow: visible; font-family: var(--ui); }
  button, input, select {
    font: inherit; color: inherit; margin: 0; padding: 0; border: 0; background: none;
    border-radius: 0; min-width: 0; outline: none; appearance: none;
  }
  .face {
    border: 1px solid var(--edge); border-radius: 3px;
    background: linear-gradient(#faf9f6, #d8d5ce);
    display: flex; align-items: center; justify-content: center;
  }
  .push { width: 80px; height: 22px; position: relative; }
  .field {
    display: flex; align-items: stretch; border: 1px solid var(--edge);
    border-radius: 3px; background: #fff; height: 20px; overflow: hidden;
  }
  .field input, .field select { flex: 1; width: 0; padding: 0 4px; }
  .spin { width: 14px; flex: none; display: flex; flex-direction: column; border-left: 1px solid var(--edge); background: linear-gradient(#faf9f6, #d8d5ce); }
  .spin button { flex: 1; display: flex; align-items: center; justify-content: center; }
  .tri-up, .tri-down, .tri-right { width: 0; height: 0; display: block; flex: none; }
  .tri-up { border: 4px solid transparent; border-top: 0; border-bottom-color: #555; }
  .tri-down { border: 4px solid transparent; border-bottom: 0; border-top-color: #555; }
  .tri-right { border: 4px solid transparent; border-right: 0; border-left-color: #555; }
  .dim { opacity: .5; }
  .combo { position: relative; display: flex; align-items: center; }
  .combo select { flex: 1; width: 0; height: 100%; padding: 0 3px; }
  .combo .tri-down { margin-right: 7px; pointer-events: none; }
  .scroll { width: 14px; flex: none; display: flex; flex-direction: column; background: #c9c5be; border-left: 1px solid #aaa69e; }
  .scroll button { height: 14px; flex: none; display: flex; align-items: center; justify-content: center; background: #e4e1db; border-bottom: 1px solid #aaa69e; }
  .scroll .thumb { background: linear-gradient(90deg, #efede9, #d9d6cf); border-bottom: 1px solid #aaa69e; }
  .scroll .track { flex: 1; }
  .titlebar { height: 18px; flex: none; display: flex; align-items: center; gap: 1px; padding: 0 3px; font-weight: 700; }
  .titlebar .name { flex: 1; font-size: 11px; }
  .close {
    width: 16px; height: 14px; display: flex; align-items: center; justify-content: center;
    background: var(--face); border: 1px solid; border-color: #fff #404040 #404040 #fff;
  }
`;

const closeButton = html`<button class="close" aria-label="Close"><svg width="8" height="8" viewBox="0 0 8 8"><path d="M0 .500L8 7.500M8 .500L0 7.500" stroke="#000" stroke-width="1.700"/></svg></button>`;

const spinButtons = (topDim = false) => html`<span class="spin">
  <button aria-label="Increase"><i class="tri-up ${topDim ? "dim" : ""}"></i></button>
  <button aria-label="Decrease"><i class="tri-down"></i></button></span>`;

/* ---------- context menu ---------- */

interface MenuEntry { label?: string; icon?: string; off?: boolean; sub?: boolean; check?: boolean; }
const MENU: MenuEntry[] = [
  { label: "&Zoom to Layer", icon: "zoomLayer" },
  { label: "&Zoom to Selection", icon: "zoomLayer", off: true },
  { label: "&Show in Overview", icon: "overview" },
  { label: "Show Feature Count", check: true },
  { label: "Copy Layer" },
  { label: "Re&name Layer" },
  {},
  { label: "&Duplicate Layer", icon: "duplicate" },
  { label: "&Remove Layer…", icon: "removeLayer" },
  {},
  { label: "&Open Attribute Table", icon: "table" },
  { label: "Toggle Editing", icon: "pencil" },
  { label: "&Filter…" },
  { label: "Change Data Source…" },
  {},
  { label: "&Set Layer Scale Visibility…" },
  { label: "Set CRS", sub: true },
  {},
  { label: "Export", sub: true },
  {},
  { label: "Styles", sub: true },
  { label: "&Properties…" },
];

@customElement("layer-menu")
export class LayerMenu extends LitElement {
  static styles = [base, css`
    :host { display: block; background: #fff; border: 1px solid #8a8780; box-shadow: 3px 3px 2px rgba(0, 0, 0, .45); padding: 0 4px; }
    .item { display: flex; align-items: center; width: 100%; height: 21px; text-align: left; padding-left: 2px; }
    .slot { width: 16px; height: 16px; margin-right: 4px; flex: none; display: flex; align-items: center; justify-content: center; }
    .text { flex: 1; }
    .off { opacity: .45; }
    .sep { height: 1px; background: #b5b2ab; margin-bottom: 1px; }
    .box { width: 14px; height: 14px; border: 1px solid #9a978f; background: #fff; }
  `];
  render() {
    return MENU.map((m) => !m.label
      ? html`<div class="sep" role="separator"></div>`
      : m.check
        ? html`<label class="item"><span class="slot"><input class="box" type="checkbox"></span><span class="text">${accel(m.label)}</span></label>`
        : html`<button class=${classMap({ item: true, off: !!m.off })} ?disabled=${!!m.off}>
            <span class="slot">${m.icon ? icon(m.icon, 16) : nothing}</span>
            <span class="text">${accel(m.label)}</span>${m.sub ? html`<i class="tri-right"></i>` : nothing}</button>`);
  }
}

/* ---------- layer properties dialog ---------- */

const PAGES: [string, string][] = [
  ["info", "Information"], ["source", "Source"], ["paint", "Symbology"], ["labels", "Labels"], ["diagram", "Diagrams"],
  ["view3d", "3D View"], ["fields", "Source Fields"], ["attrForm", "Attributes Form"], ["joins", "Joins"],
  ["auxStorage", "Auxiliary Storage"], ["actions", "Actions"], ["display", "Display"], ["rendering", "Rendering"],
  ["variables", "Variables"], ["metadata", "Metadata"], ["dependencies", "Dependencies"], ["legend", ""],
];

const hatch = (dir: 1 | -1) => {
  const lines: string[] = [];
  const w = 62, h = 52;
  for (let k = -h + 4; k < w; k += 9) {
    const a = Math.max(k, 0), b = Math.min(k + h, w);
    const ya = a - k, yb = b - k;
    lines.push(dir > 0 ? `M${a + 1} ${h - ya + 1}L${b + 1} ${h - yb + 1}` : `M${a + 1} ${ya + 1}L${b + 1} ${yb + 1}`);
  }
  return svg`<path d=${lines.join("")} stroke="#111" stroke-width="1.200"/><rect x="1" y="1" width="62" height="52" fill="none" stroke="#111" stroke-width="1.500"/>`;
};
const dotFill = () => {
  const dots = [];
  for (let r = 0; r < 6; r++) for (let c = 0; c < 7; c++) dots.push(svg`<circle cx=${8 + c * 8 - (r % 2) * 4} cy=${7 + r * 7} r="1.200"/>`);
  return svg`<rect x="1" y="1" width="62" height="52" fill="#fff" stroke="#111" stroke-width="1.500"/>${dots}`;
};
const SYMBOLS: { label: string; art: unknown }[] = [
  { label: "gradient plasma", art: svg`<defs><radialGradient id="plasma" gradientUnits="userSpaceOnUse" cx="0" cy="0" r="80"><stop offset="0" stop-color="#1a0a88"/><stop offset=".28" stop-color="#7a08a6"/><stop offset=".52" stop-color="#cc4a77"/><stop offset=".72" stop-color="#f08450"/><stop offset="1" stop-color="#f8e825"/></radialGradient></defs><rect x="1" y="1" width="62" height="52" fill="url(#plasma)" stroke="#111" stroke-width="1.500"/>` },
  { label: "gray 3 fill", art: svg`<rect x="1" y="1" width="62" height="52" fill="#969696" stroke="#b9b9b9"/>` },
  { label: "hashed black /", art: hatch(1) },
  { label: "hashed black \\", art: hatch(-1) },
  { label: "", art: svg`<rect x="1" y="2" width="62" height="52" fill="#fff" stroke="#52a852" stroke-width="4"/>` },
  { label: "", art: svg`<rect x="1" y="2" width="62" height="52" fill="#fff" stroke="#d42428" stroke-width="4"/>` },
  { label: "", art: svg`<rect x="1" y="2" width="62" height="52" fill="#f3f3f3" stroke="#999" stroke-width="1.500"/><g fill="#4caf50" stroke="#2f6b32"><circle cx="1" cy="2" r="3.500"/><circle cx="39" cy="2" r="3.500"/><circle cx="1" cy="24" r="3.500"/><circle cx="63" cy="9" r="3.500"/></g><g fill="#d9232a" stroke="#8a1014"><circle cx="19" cy="2" r="3.500"/><circle cx="1" cy="7" r="3.500"/><circle cx="57" cy="2" r="3.500"/><circle cx="63" cy="25" r="3.500"/></g>` },
  { label: "", art: dotFill() },
];

@customElement("layer-properties")
export class LayerProperties extends LitElement {
  static styles = [base, css`
    :host { display: flex; flex-direction: column; background: var(--face); padding: 2px; border: 1px solid; border-color: #d4d0c8 #404040 #404040 #d4d0c8; box-shadow: inset 1px 1px #fff, inset -1px -1px #808080; }
    .titlebar { background: linear-gradient(90deg, #808080, #c0c0c0); color: #d4d0c8; }
    .main { flex: 1; display: flex; min-height: 0; }
    .side { width: 150px; flex: none; display: flex; flex-direction: column; background: #585856; }
    .find { height: 22px; margin: 1px 1px 8px; display: flex; align-items: center; padding-left: 8px; background: #fff; border-radius: 2px; }
    .find input { flex: 1; width: 0; padding: 0 6px; }
    .lists { flex: 1; display: flex; min-height: 0; }
    .pages { flex: 1; overflow: hidden; }
    .page { width: 100%; height: 36px; display: flex; align-items: center; gap: 7px; padding-left: 5px; color: #ecebe8; text-align: left; white-space: nowrap; }
    .page.on { background: var(--face); color: #000; padding-left: 7px; }
    .thumb { flex: 0 0 468px; }
    .scroll .bottom { border-top: 1px solid #aaa69e; border-bottom: 0; }
    .body { flex: 1; min-width: 0; display: flex; flex-direction: column; padding: 5px 4px 3px; }
    .renderer { height: 24px; padding-left: 6px; flex: none; }
    .symbol { display: flex; height: 136px; margin: 6px 0; gap: 6px; flex: none; }
    .preview { width: 136px; flex: none; display: flex; align-items: center; justify-content: center; }
    .preview i { width: 61px; height: 61px; background: var(--purple); border: 1px solid #111; }
    .layers { flex: 1; background: #fff; border: 1px solid var(--edge); }
    .layers li { display: flex; align-items: center; height: 18px; gap: 6px; padding-left: 6px; }
    .layers li.top { background: var(--face); font-weight: 700; }
    .layers li.child { padding-left: 43px; gap: 4px; }
    .chip { width: 16px; height: 16px; border: 1px solid #463450; background: var(--purple); }
    .chip.dark { background: #66488a; margin-left: 3px; }
    .tools { display: grid; grid-template-columns: 28px 28px; grid-auto-rows: 24px; gap: 5px 6px; padding-top: 1px; }
    .tools .off { border-color: #b4b1a9; }
    .tools .off .icon { opacity: .4; filter: grayscale(.6); }
    .rule { height: 2px; flex: none; border-top: 1px solid #8f8c85; background: #fff; }
    .form { flex: 1; display: grid; grid-template-columns: 37px 1fr; grid-auto-rows: 22px; padding: 7px 9px 0 0; align-items: center; align-content: start; }
    .form .combo { height: 22px; }
    .opacity { display: flex; align-items: center; gap: 4px; height: 20px; }
    .opacity input[type="range"] { flex: 1; height: 14px; background: linear-gradient(#98958d, #98958d) 0 4px / 100% 1px no-repeat, linear-gradient(#98958d, #98958d) 0 8px / 100% 1px no-repeat, linear-gradient(#eceae6, #eceae6) 0 5px / 100% 3px no-repeat; }
    .opacity input[type="range"]::-webkit-slider-thumb { appearance: none; width: 13px; height: 13px; border: 1px solid var(--edge); border-radius: 3px; background: linear-gradient(#fff, #dedbd5); }
    .opacity .field { width: 100px; }
    .color { display: flex; gap: 1px; height: 22px; }
    .color .pick { flex: 1; padding: 2px 4px; }
    .pick i { flex: 1; height: 16px; border-radius: 3px; background: var(--purple); }
    .color .more { width: 12px; }
    .fav { margin-top: 4px; height: 22px; flex: none; border: 1px solid var(--edge); border-radius: 3px; background: #fff; padding-left: 10px; }
    .symbols { margin-top: 5px; height: 164px; flex: none; border: 1px solid var(--edge); background: #fff; overflow: hidden; display: grid; grid-template-columns: repeat(6, 101px); grid-auto-rows: 116px; padding: 20px 2px 0; }
    .sym { display: flex; flex-direction: column; align-items: center; gap: 16px; text-align: center; }
    .sym span { width: 80px; }
    .sym svg { flex: none; overflow: visible; }
    .views { display: flex; align-items: center; margin-top: 6px; flex: none; }
    .views button { width: 24px; height: 24px; display: flex; align-items: center; justify-content: center; }
    .views .on { border: 1px solid var(--edge); border-radius: 3px; background: #c6c2ba; }
    .group { display: flex; align-items: center; gap: 9px; height: 20px; flex: none; margin: 18px 0 6px; padding-left: 5px; font-weight: 700; }
    .group .tri-right { border-width: 5px 0 5px 7px; border-left-color: #222; }
    .foot { display: flex; gap: 6px; flex: none; }
    .foot .push:first-child { margin-right: auto; padding-right: 14px; }
    .push .tri-down { position: absolute; right: 4px; top: 8px; border-width: 3px 3px 0; }
  `];
  render() {
    return html`
      <div class="titlebar">${icon("qgis", 16)}<span class="name">Layer Properties - nnov_water | Symbology</span>${closeButton}</div>
      <div class="main">
        <nav class="side">
          <div class="find">${icon("search", 13)}<input type="text" aria-label="Search options"></div>
          <div class="lists">
            <div class="pages">${PAGES.map(([ic, name], i) => html`<button class="page ${i === 2 ? "on" : ""}">${icon(ic, 24)}${name}</button>`)}</div>
            <div class="scroll"><button aria-label="Scroll up"><i class="tri-up"></i></button><span class="thumb"></span><span class="track"></span><button class="bottom" aria-label="Scroll down"><i class="tri-down"></i></button></div>
          </div>
        </nav>
        <div class="body">
          <div class="face combo renderer">${icon("single", 14)}<select aria-label="Renderer"><option>Single symbol</option></select><i class="tri-down"></i></div>
          <div class="symbol">
            <div class="preview"><i></i></div>
            <ul class="layers">
              <li class="top"><i class="tri-down"></i><i class="chip dark"></i>Fill</li>
              <li class="child"><i class="chip"></i>Simple fill</li>
            </ul>
            <div class="tools">
              <button class="face" aria-label="Add symbol layer">${icon("plus", 14)}</button>
              ${["up", "minus", "down", "duplicate", "lockOpen"].map((n) => html`<button class="face off" aria-label=${n} disabled>${icon(n, 14)}</button>`)}
            </div>
          </div>
          <div class="rule"></div>
          <div class="form">
            <label for="unit">Unit</label>
            <div class="face combo"><select id="unit"><option>Millimeter</option></select><i class="tri-down"></i></div>
            <label for="opacity">Opacity</label>
            <div class="opacity"><input id="opacity" type="range" min="0" max="100" value="100">
              <span class="field"><input type="text" value="100,0 %" aria-label="Opacity value">${spinButtons(true)}</span></div>
            <label for="color">Color</label>
            <div class="color"><button id="color" class="face pick"><i></i></button><button class="face more" aria-label="Color options"><i class="tri-down"></i></button></div>
          </div>
          <div class="rule"></div>
          <div class="combo fav">${icon("search", 13)}<select aria-label="Symbol group"><option>Favorites</option></select></div>
          <div class="symbols">${SYMBOLS.map((s, i) => html`${i === 4 ? html`<i></i><i></i>` : nothing}<div class="sym"><svg width="64" height="54" viewBox="0 0 64 54">${s.art}</svg><span>${s.label}</span></div>`)}</div>
          <div class="views"><button class="on" aria-label="Icon view">${icon("iconGrid", 14)}</button><button aria-label="List view">${icon("table", 14)}</button></div>
          <div class="group"><i class="tri-right"></i>Layer Rendering</div>
          <div class="foot"><button class="face push">Style<i class="tri-down"></i></button><button class="face push">OK</button><button class="face push">Cancel</button><button class="face push">Apply</button><button class="face push">Help</button></div>
        </div>
      </div>`;
  }
}

/* ---------- color dialog ---------- */

interface Channel { key: string; text: string; pos: number; ramp: string; }
const CHANNELS: Channel[] = [
  { key: "H", text: "288°", pos: 80, ramp: "linear-gradient(90deg,#995a5a,#99995a 16.700%,#5a995a 33.300%,#5a9999 50%,#5a5a99 66.700%,#995a99 83.300%,#995a5a)" },
  { key: "S", text: "41%", pos: 41, ramp: "linear-gradient(90deg,#999,#7a0099)" },
  { key: "V", text: "60%", pos: 60, ramp: "linear-gradient(90deg,#000,#eb96ff)" },
  { key: "R", text: "141", pos: 55, ramp: "linear-gradient(90deg,#005a99,#ff5a99)" },
  { key: "G", text: "90", pos: 35, ramp: "linear-gradient(90deg,#8d0099,#8dff99)" },
  { key: "B", text: "153", pos: 60, ramp: "linear-gradient(90deg,#8d5a00,#8d5aff)" },
];

@customElement("color-dialog")
export class ColorDialog extends LitElement {
  static styles = [base, css`
    :host { display: flex; flex-direction: column; background: var(--face); border: 1px solid; border-color: #d4d0c8 #404040 #404040 #d4d0c8; box-shadow: inset -1px 0 #808080; padding-right: 1px; }
    .titlebar { background: linear-gradient(90deg, #0a246a, #a6caf0); color: #fff; padding: 0 3px 0 2px; }
    .grid { flex: 1; display: grid; grid-template-columns: 264px 1fr; grid-template-rows: auto 61px 22px; gap: 16px 13px; padding: 12px 13px 0 11px; }
    .tabs { display: flex; align-items: flex-end; }
    .tab { width: 44px; height: 25px; border: 1px solid #aeaaa2; border-bottom: 0; border-left: 0; background: #cecac2; display: flex; align-items: center; justify-content: center; padding-right: 6px; }
    .tab.on { width: 45px; height: 27px; margin-bottom: -1px; border: 1px solid var(--edge); border-bottom: 0; border-radius: 3px 3px 0 0; background: #dfdcd5; position: relative; }
    .pane { height: 240px; border: 1px solid var(--edge); background: #dfdcd5; display: flex; gap: 7px; padding: 10px; }
    .well { position: relative; border: 1px solid var(--edge); padding: 1px; background: #e9e7e2; display: flex; }
    .well.map { flex: 1; }
    .well.bar { width: 25px; }
    .plane { flex: 1; background: linear-gradient(90deg, #999, rgba(153, 153, 153, 0)), linear-gradient(#900, #909 16.700%, #009 33.300%, #099 50%, #090 66.700%, #990 83.300%, #900); }
    .value { flex: 1; background: linear-gradient(#eb96ff, #000); }
    .cross { position: absolute; background: #000; }
    .cross.v { width: 3px; top: 1px; bottom: 1px; left: 40%; border: solid #fff; border-width: 0 1px; }
    .cross.h { height: 3px; left: 1px; right: 1px; top: 20%; border: solid #fff; border-width: 1px 0; }
    .mark { position: absolute; left: 1px; right: 1px; top: 40%; height: 3px; background: #fff; border-top: 1px solid #000; }
    .compare { display: flex; gap: 6px; padding-right: 9px; }
    .names { width: 46px; display: flex; flex-direction: column; text-align: right; line-height: 31px; }
    .names span { flex: 1; }
    .names span:last-child { line-height: 36px; }
    .swatch { flex: 1; border: 1px solid var(--edge); padding: 1px; background: #e9e7e2; display: flex; }
    .swatch i { flex: 1; background: var(--purple); }
    .use { width: 28px; }
    .channels { display: flex; flex-direction: column; gap: 11px; padding: 12px 9px 0 0; }
    .row { display: flex; align-items: center; height: 20px; }
    .row .field { width: 64px; margin-left: 9px; }
    .row input[type="radio"] { width: 14px; height: 14px; flex: none; border: 1px solid #85827b; border-radius: 7px; background: #fff; margin: 0 5px 0 1px; }
    .row input[type="radio"]:checked { background: radial-gradient(circle at 50% 50%, #333 3px, #fff 4px); }
    .key { width: 18px; padding-top: 2px; }
    .opa { width: 48px; }
    .ramp { flex: 1; height: 17px; display: flex; }
    .ramp input { flex: none; width: calc(100% + 8px); margin: 0 -4px; height: 19px; }
    .ramp input::-webkit-slider-thumb { appearance: none; width: 9px; height: 18px; background: linear-gradient(#000 50%, #fff 50%); clip-path: polygon(0 0, 100% 0, 50% 26%, 50% 74%, 100% 100%, 0 100%, 50% 74%, 50% 26%); }
    .alpha { background: linear-gradient(90deg, rgba(141, 90, 153, 0), #8d5a99), repeating-conic-gradient(#c9c9c9 0 25%, #fff 0 50%) 0 0 / 8px 8px; }
    .html { margin-top: -2px; }
    .html .field { flex: 1; margin-left: 4px; align-items: center; padding-right: 4px; }
    .html .field input { padding-left: 2px; }
    .html svg { flex: none; }
    .palette { display: grid; grid-template-columns: repeat(8, 1fr); grid-template-rows: 30px 30px; gap: 1px 2px; padding: 0 9px 0 1px; }
    .foot { grid-column: 1 / -1; display: flex; gap: 6px; }
    .foot .push:first-child { margin-right: auto; }
    .push.main { border-color: #0a246a; background: linear-gradient(#e2e2e4, #c8c9d0); }
    .sizer { align-self: flex-end; margin: 0 3px 2px 0; }
  `];
  render() {
    return html`
      <div class="titlebar">${icon("qgis", 16)}<span class="name">Select Color</span>${closeButton}</div>
      <div class="grid">
        <div>
          <div class="tabs">${["tabRamp", "tabWheel", "tabSwatch", "tabPicker"].map((t, i) => html`<button class="tab ${i === 0 ? "on" : ""}" aria-label=${t}>${icon(t, 16)}</button>`)}</div>
          <div class="pane">
            <div class="well map"><div class="plane"></div><i class="cross h"></i><i class="cross v"></i></div>
            <div class="well bar"><div class="value"></div><i class="mark"></i></div>
          </div>
        </div>
        <div class="channels">
          ${CHANNELS.map((c) => html`<div class="row">
            <input type="radio" name="channel" id="c${c.key}" ?checked=${c.key === "V"}><label class="key" for="c${c.key}">${c.key}</label>
            <div class="ramp" style=${styleMap({ background: c.ramp })}><input type="range" min="0" max="100" .value=${String(c.pos)} aria-label=${c.key}></div>
            <span class="field"><input type="text" .value=${c.text} aria-label="${c.key} value">${spinButtons()}</span></div>`)}
          <div class="row"><label class="opa" for="alpha">Opacity</label>
            <div class="ramp alpha"><input id="alpha" type="range" min="0" max="100" .value=${"100"}></div>
            <span class="field"><input type="text" value="100%" aria-label="Opacity value">${spinButtons(true)}</span></div>
          <div class="row html"><label for="notation">HTML notation</label>
            <span class="field"><input id="notation" type="text" value="#8d5a99"><svg width="12" height="9" viewBox="0 0 12 9"><path d="M1 1H11L6 8Z" fill="#e4e4e4" stroke="#aaa" stroke-width="1.500"/></svg></span></div>
        </div>
        <div class="compare"><div class="names"><span>Current</span><span>Old</span></div><div class="swatch"><i></i></div><button class="face use" aria-label="Use old color">${icon("arrowRight", 18)}</button></div>
        <div class="palette">${Array.from({ length: 16 }, (_, i) => html`<button class="face" aria-label="Custom color ${i + 1}"></button>`)}</div>
        <div class="foot"><button class="face push">Reset</button><button class="face push main">OK</button><button class="face push">Cancel</button><button class="face push">Help</button></div>
      </div>
      <svg class="sizer" width="11" height="11" viewBox="0 0 11 11"><path d="M9 1h1M9 4h1M6 4h1M9 7h1M6 7h1M3 7h1M9 10h1M6 10h1M3 10h1M0 10h1" stroke="#98958d" stroke-width="1.500"/></svg>`;
  }
}

/* ---------- main window ---------- */

const MENUS = ["Pro&ject", "&Edit", "&View", "&Layer", "&Settings", "&Plugins", "Vect&or", "&Raster", "&Database", "&Web", "&Mesh", "Pro&cessing", "&Help"];

/* "|" grip, "/" thin divider, ">" drop-down arrow, "-" prefix for a disabled tool, "+" for a pressed one */
const BAR1 = "| new open save newLayout layoutMgr styleMgr | +hand panSel zoomIn zoomOut zoomFull zoomSel zoomLayer -zoomNative zoomLast -zoomNext bookNew bookRibbonNew bookRibbon refresh | identify -action -> select > form > deselect table abacus gear sigma measure > tip textAnn >".split(" ");
const BAR2 = "| dataSource geopackage vectorNew feather chip / virtual | -pencils pencil -saveEdits -addPoly -vertex > -multiEdit -trash -cut -copy -paste -undo -redo | abc diagram abPin -tagPin -tagEye -tagMove -tagRotate -tagEdit | metaSearch | python | help |".split(" ");

const BROWSER: { d: number; icon: string; label: string; open?: boolean; on?: boolean }[] = [
  { d: 0, icon: "star", label: "Favorites", open: true },
  { d: 1, icon: "folderLinked", label: "C:\\Users\\Administrator\\Desktop\\MSA_Lab0", open: true },
  { d: 2, icon: "folderLinked", label: "Lab0_shapedata", open: true },
  { d: 3, icon: "polygon", label: "nnov_bound.shp" },
  { d: 3, icon: "polygon", label: "nnov_bound_wgs84.shp" },
  { d: 3, icon: "polygonSel", label: "nnov_water.shp", on: true },
  { d: 0, icon: "home", label: "Home", open: false },
  { d: 0, icon: "folderLinked", label: "C:\\", open: false },
  { d: 0, icon: "folder", label: "D:\\", open: false },
  { d: 0, icon: "folder", label: "E:\\", open: false },
  { d: 0, icon: "folder", label: "F:\\", open: false },
  { d: 0, icon: "geopackagePlain", label: "GeoPackage" },
  { d: 0, icon: "featherPlain", label: "SpatiaLite" },
  { d: 0, icon: "postgis", label: "PostGIS" },
  { d: 0, icon: "mssql", label: "MSSQL" },
  { d: 0, icon: "oracle", label: "Oracle" },
  { d: 0, icon: "db2", label: "DB2" },
  { d: 0, icon: "globe", label: "WMS/WMTS" },
  { d: 0, icon: "globe", label: "XYZ Tiles", open: false },
  { d: 0, icon: "globe", label: "WCS" },
];

@customElement("app-root")
export class AppRoot extends LitElement {
  @property() message = "1 legend entries removed.";

  static styles = [base, css`
    :host { display: flex; flex-direction: column; position: relative; width: 100%; height: 100vh; background: var(--face); overflow: hidden; }
    .menubar { height: 18px; flex: none; display: flex; padding-left: 1px; border-bottom: 1px solid #b4b0a8; }
    .menubar button { padding: 0 7px; line-height: 18px; }
    .toolbar { height: 39px; flex: none; display: flex; align-items: center; background: linear-gradient(#dedad3, #d4d0c8); border-bottom: 1px solid #98958d; border-top: 1px solid #efede9; }
    .grip { --dots: repeating-linear-gradient(#a5a199 0 1px, #eceae6 1px 2px, transparent 2px 3px); width: 16px; height: 17px; flex: none; background: var(--dots) 7px 0 / 1px 100% no-repeat, var(--dots) 10px 0 / 1px 100% no-repeat; }
    .grip:first-child { width: 12px; background-position: 4px 0, 7px 0; }
    .divider { width: 6px; height: 22px; border-right: 1px solid #fff; flex: none; }
    .tool { width: 33px; height: 32px; flex: none; display: flex; align-items: center; justify-content: center; }
    .tool.off .icon, .drop.off { opacity: .35; filter: grayscale(.9); }
    .tool.on { width: 31px; margin: 0 1px; border: 1px solid #a09c94; border-radius: 3px; background: #c3bfb8; }
    .drop { width: 12px; flex: none; display: flex; align-items: center; justify-content: flex-start; height: 20px; padding-left: 1px; }
    .work { flex: 1; display: flex; min-height: 0; }
    .docks { width: 300px; flex: none; display: flex; flex-direction: column; border-right: 1px solid #98958d; }
    .dock { flex: 10 1 0; min-height: 0; display: flex; flex-direction: column; padding: 2px 7px 0 0; }
    .dock.first { flex-grow: 13; padding-top: 0; }
    .splitter { --dots: repeating-linear-gradient(90deg, #a5a199 0 1px, transparent 1px 3px); height: 6px; flex: none; background: var(--dots) 0 1px / 100% 1px no-repeat; width: 16px; align-self: center; }
    .head { height: 20px; flex: none; display: flex; align-items: center; gap: 3px; font-weight: 700; padding-left: 3px; }
    .head span { flex: 1; }
    .head button { width: 11px; height: 11px; display: flex; border: 1px solid #77746d; border-radius: 2px; align-items: center; justify-content: center; }
    .head button:last-child { margin-right: 1px; }
    .strip { height: 30px; flex: none; display: flex; align-items: center; padding-left: 7px; gap: 9px; }
    .strip .tri-down { margin: 0 -2px 0 -3px; }
    .pane { flex: 1; min-height: 0; background: #fff; border-top: 1px solid #98958d; display: flex; }
    .pane ul { flex: 1; overflow: hidden; padding-top: 1px; }
    .layer { display: flex; align-items: center; gap: 6px; height: 18px; padding-left: 23px; font-weight: 700; }
    .layer.on { background: #0a246a; color: #fff; }
    .layer.on label { text-decoration: underline; }
    .layer i { width: 16px; height: 16px; border: 1px solid #8a6a3c; background: #fdbf6f; }
    .layer.on i { background: #66488a; border-color: #463450; }
    .tick { width: 14px; height: 14px; border: 1px solid #77746d; background: #fff; flex: none; }
    .tick:checked::before { content: ""; display: block; width: 100%; height: 100%; background: #000; clip-path: polygon(12% 45%, 28% 40%, 42% 66%, 78% 8%, 92% 12%, 46% 94%, 34% 92%); }
    .node { display: flex; align-items: center; height: 18px; white-space: nowrap; }
    .node.on { background: var(--face); margin-right: 4px; }
    .caret { width: 20px; display: flex; justify-content: center; flex: none; }
    .glyph { width: 22px; margin-right: 2px; display: flex; justify-content: center; flex: none; }
    .thumb { flex: 0 0 246px; }
    .scroll .bottom { border-top: 1px solid #aaa69e; border-bottom: 0; }
    .canvas { flex: 1; background: #fff; position: relative; overflow: hidden; border-bottom: 1px solid #98958d; }
    .features { position: absolute; left: 980px; top: 304px; }
    .status { height: 29px; flex: none; display: flex; align-items: center; padding: 1px 7px 0 3px; gap: 4px; }
    .locate { width: 199px; align-items: center; padding-left: 9px; margin-right: 6px; }
    .locate input { padding: 0 6px; }
    .locate input::placeholder { color: #777; opacity: 1; }
    .msg { flex: 1; }
    .status .coord { width: 103px; }
    .status .coord input { text-align: center; padding: 0; }
    .status .scale { width: 80px; margin-right: 9px; }
    .status .scale b { width: 19px; border-left: 1px solid var(--edge); background: linear-gradient(#faf9f6, #d8d5ce); display: flex; align-items: center; justify-content: center; }
    .status .mag { width: 86px; margin-right: 6px; }
    .status .rot { width: 83px; margin: 0 4px 0 5px; }
    .icons { display: flex; justify-content: center; width: 22px; }
    .crs { display: flex; align-items: center; gap: 3px; margin: 0 12px 0 17px; }
    .context { position: absolute; left: 132px; top: 157px; width: 220px; }
    .props { position: absolute; left: 462px; top: 211px; width: 832px; height: 639px; }
    .colors { position: absolute; left: 1034px; top: 537px; width: 625px; height: 423px; }
    .notes { position: absolute; inset: 0; width: 100%; height: 100%; pointer-events: none; font-family: "DejaVu Sans", sans-serif; }
    .notes path, .notes rect, .notes ellipse { fill: none; stroke: var(--orange); stroke-width: 5; }
    .notes text { fill: var(--orange); font-size: 25px; font-weight: 700; text-anchor: middle; }
  `];

  private bar(items: string[]) {
    return html`<div class="toolbar" role="toolbar">${items.map((raw) => {
      if (raw === "|") return html`<span class="grip"></span>`;
      if (raw === "/") return html`<span class="divider"></span>`;
      const off = raw[0] === "-", on = raw[0] === "+";
      const name = off || on ? raw.slice(1) : raw;
      return name === ">"
        ? html`<button class=${classMap({ drop: true, off })} aria-label="More"><i class="tri-down"></i></button>`
        : html`<button class=${classMap({ tool: true, off, on })} aria-label=${name}>${icon(name, 23)}</button>`;
    })}</div>`;
  }

  private head(name: string) {
    return html`<div class="head"><span>${name}</span>
      <button aria-label="Float"><svg width="7" height="7" viewBox="0 0 7 7"><path d="M2.500 .500H6.500V4.500H2.500ZM.500 2.500H4.500V6.500H.500Z" fill="none" stroke="#666"/></svg></button>
      <button aria-label="Close"><svg width="7" height="7" viewBox="0 0 7 7"><path d="M.500 .500L6.500 6.500M6.500 .500L.500 6.500" stroke="#555" stroke-width="2"/></svg></button></div>`;
  }

  render() {
    return html`
      <nav class="menubar">${MENUS.map((m) => html`<button>${accel(m)}</button>`)}</nav>
      ${this.bar(BAR1)}${this.bar(BAR2)}
      <div class="work">
        <div class="docks">
          <section class="dock first">
            ${this.head("Layers")}
            <div class="strip">${["stylePaint", "addGroup", "eye", "filter", "expression"].map((n) => icon(n, 16))}<i class="tri-down"></i>${["expand", "collapse", "removeLayer"].map((n) => icon(n, 16))}</div>
            <div class="pane"><ul>
              <li class="layer on"><input class="tick" type="checkbox" id="water" checked><i></i><label for="water">nnov_water</label></li>
              <li class="layer"><input class="tick" type="checkbox" id="bound" checked><i></i><label for="bound">nnov_bound</label></li>
            </ul></div>
          </section>
          <div class="splitter"></div>
          <section class="dock">
            ${this.head("Browser")}
            <div class="strip">${["addLayer", "refresh", "filter", "collapse", "info"].map((n) => icon(n, 16))}</div>
            <div class="pane">
              <ul>${BROWSER.map((n) => html`<li class=${classMap({ node: true, on: !!n.on })} style=${styleMap({ paddingLeft: `${n.d * 20}px` })}>
                <span class="caret">${n.open === undefined ? nothing : html`<i class=${n.open ? "tri-down" : "tri-right"}></i>`}</span>
                <span class="glyph">${icon(n.icon, 16)}</span>${n.label}</li>`)}</ul>
              <div class="scroll"><button aria-label="Scroll up"><i class="tri-up"></i></button><span class="thumb"></span><span class="track"></span><button class="bottom" aria-label="Scroll down"><i class="tri-down"></i></button></div>
            </div>
          </section>
        </div>
        <main class="canvas">
          <svg class="features" width="240" height="150" viewBox="0 0 720 450">
            <path d="M0 40L40 64L86 93L188 77L468 86L534 140L654 385L640 400L600 450H0Z" fill="#8d5a99" stroke="#222" stroke-width="3"/>
            <path d="M0 200L44 184C60 150 90 136 108 133C140 124 180 120 272 130C290 122 310 112 326 128L340 142C352 134 360 138 370 140L405 140C412 150 408 158 418 160C424 156 428 162 432 170C438 180 446 184 454 180C456 172 442 158 436 146C428 132 410 126 396 126C384 126 380 120 386 114C410 108 440 112 462 116C490 130 492 150 500 162C530 190 566 250 566 284C560 294 574 310 570 318C576 336 588 348 588 352C600 360 612 376 620 384C618 394 600 380 610 374L608 450H0Z" fill="#fdbf6f" stroke="#222" stroke-width="2.500"/>
            <path d="M304 140C304 128 322 128 326 146C370 168 430 196 470 208C510 216 550 256 566 272L560 286C520 256 480 222 440 208C400 190 340 160 306 150Z" fill="#8d5a99" stroke="#222" stroke-width="2.500"/>
            <path d="M344 112C356 104 372 104 380 108C372 116 358 120 346 118Z" fill="#fdbf6f" stroke="#222" stroke-width="2"/>
            <path d="M434 121L462 123M566 292C566 312 578 320 578 330C574 336 590 338 588 328" fill="none" stroke="#222" stroke-width="2.500"/>
            <path d="M40 100L108 134M40 300L96 308L146 290L276 217C290 236 300 236 302 248C322 260 326 270 330 288C338 290 332 304 340 312C344 320 348 330 352 340C366 336 366 350 384 364C374 376 382 390 386 400" fill="none" stroke="#222" stroke-width="2.500"/>
          </svg>
        </main>
      </div>
      <footer class="status">
        <span class="field locate">${icon("search", 13)}<input type="text" placeholder="Type to locate (Ctrl+K)" aria-label="Locate"></span>
        <span class="msg">${this.message}</span>
        <label for="coord">Coordinate</label><span class="field coord"><input id="coord" type="text" value="4821527,7569397"></span>
        <span class="icons">${icon("extents", 16)}</span>
        <label for="scale">Scale</label><span class="field scale"><select id="scale"><option>1:297179</option></select><b><i class="tri-down"></i></b></span>
        ${icon("lock", 14)}
        <label for="mag">Magnifier</label><span class="field mag"><input id="mag" type="text" value="100%">${spinButtons()}</span>
        <label for="rot">Rotation</label><span class="field rot"><input id="rot" type="text" value="0,0 °">${spinButtons()}</span>
        <input class="tick" type="checkbox" id="render" checked><label for="render">Render</label>
        <span class="crs">${icon("globeGrey", 15)}EPSG:3395</span>
        ${icon("messages", 16)}
      </footer>

      <layer-menu class="context"></layer-menu>
      <layer-properties class="props"></layer-properties>
      <color-dialog class="colors"></color-dialog>
      <svg class="notes">
        <rect x="37.500" y="145.500" width="26" height="19"/>
        <path d="M62 143C150 130 220 115 285 115S430 122 603 204"/>
        <rect x="133.500" y="503.500" width="218" height="25"/>
        <path d="M352 516L460 358"/>
        <path d="M1030 855H459V205.500H1298V535"/>
        <ellipse cx="529" cy="352.500" rx="68" ry="20.500"/>
        <path d="M1124 471L1129 534"/>
        <rect x="1031.500" y="534.500" width="631" height="427"/>
        <text x="42" y="217">4</text><text x="107" y="525">1</text><text x="429" y="361">2</text><text x="1101" y="516">3</text>
      </svg>`;
  }
}
